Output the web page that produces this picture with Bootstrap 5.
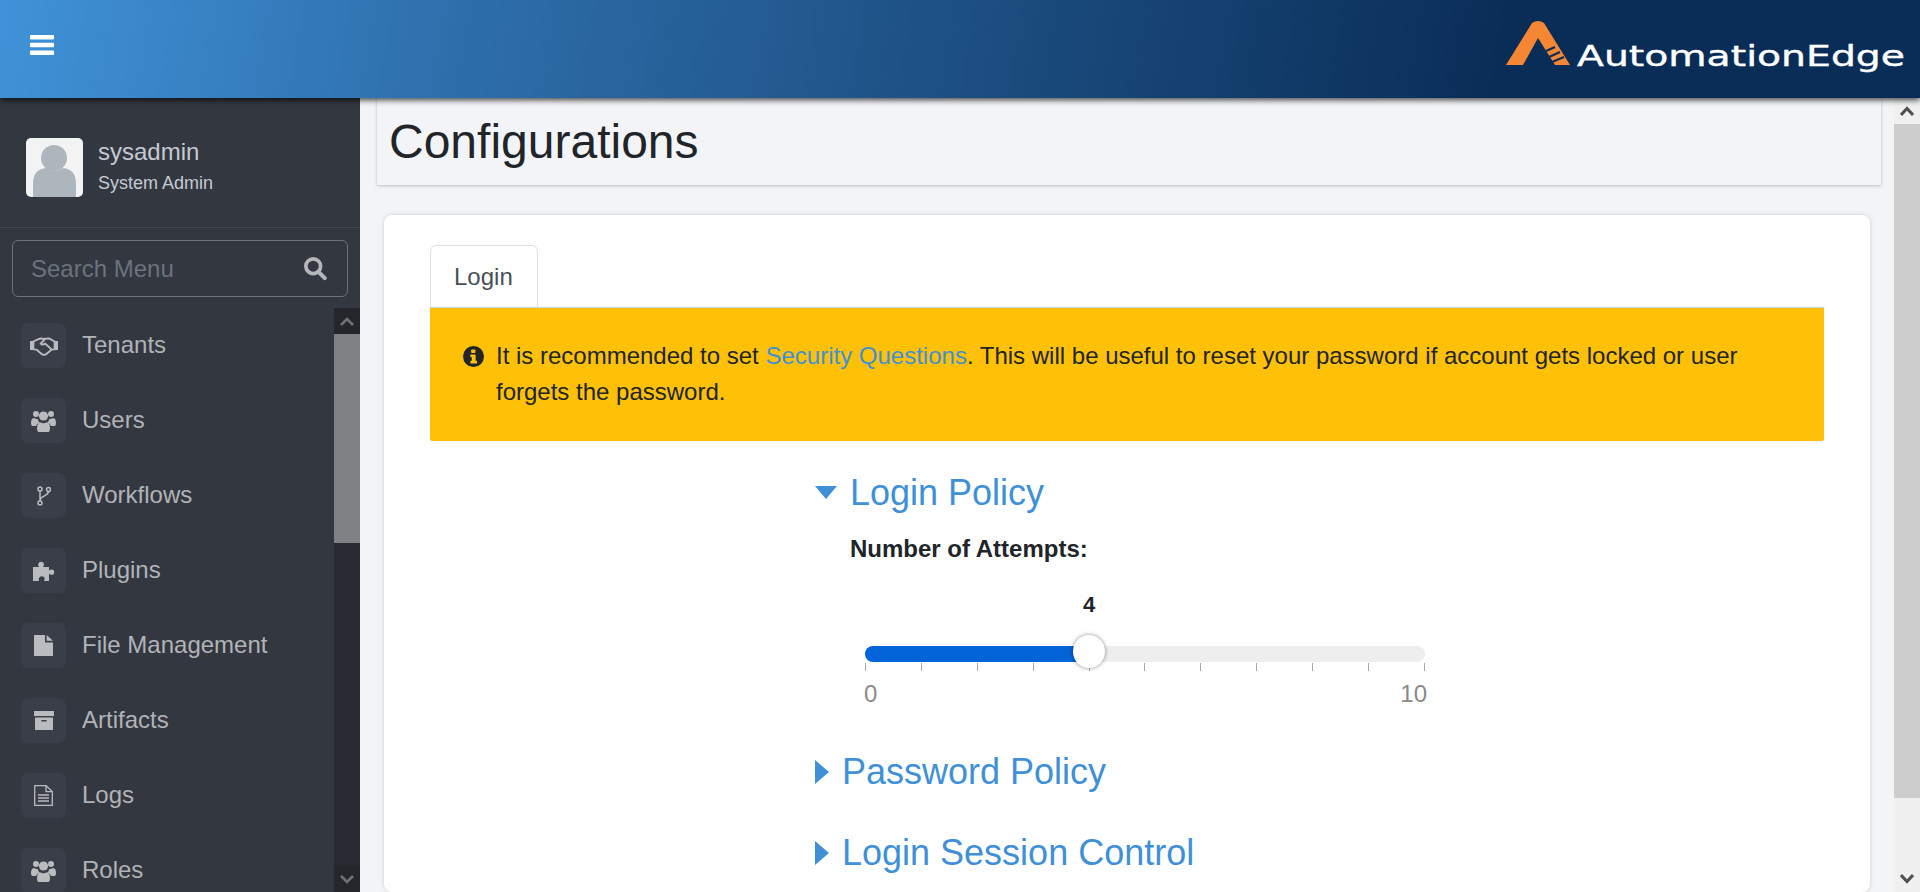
<!DOCTYPE html>
<html lang="en">
<head>
<meta charset="utf-8">
<title>Configurations</title>
<link rel="stylesheet" href="https://cdn.jsdelivr.net/npm/bootstrap@5.3.0/dist/css/bootstrap.min.css">
<style>
html,body{height:100%;}
body{font-family:"Liberation Sans",Arial,sans-serif;font-size:24px;background:#f3f4f8;color:#212529;overflow:hidden;}
.ae-header{height:98px;flex:none;padding:0 15px 0 30px;background:linear-gradient(100deg,#4092d8 0%,#2f71ae 22%,#0a2d57 78%,#0a2d57 100%);box-shadow:0 2px 6px rgba(0,0,0,.75);position:relative;z-index:5;}
.ae-burger{margin-top:-8px;line-height:0;}
.ae-body{flex:1;min-height:0;}
.ae-side{width:360px;flex:none;background:#333740;color:#b4b6ba;}
.ae-user{height:130px;padding:40px 26px 0;border-bottom:1px solid #434750;gap:15px;flex:none;}
.ae-name{font-size:24px;line-height:28px;color:#c5cad2;}
.ae-role{font-size:18px;line-height:22px;color:#c5cad2;margin-top:6px;}
.ae-avatar{width:57px;height:59px;border-radius:5px;background:#f3f3f3;display:block;}
.ae-search{margin:12px 12px 11px;height:57px;border:1px solid #6e7279;border-radius:6px;padding:0 20px 0 18px;flex:none;}
.ae-search input{background:transparent;border:0;outline:0;font-size:24px;color:#dee2e6;width:100%;padding:0;}
.ae-search input::placeholder{color:#6c737c;opacity:1;}
.ae-menuwrap{flex:1;min-height:0;}
.ae-menu{flex:1;overflow:hidden;padding:15px 0 0 21px;margin:0;list-style:none;}
.ae-menu li{height:45px;margin-bottom:30px;gap:16px;font-size:24px;color:#b1b3b7;}
.ae-menu li b{font-weight:400;margin-top:-2px;}
.ae-ico{width:45px;height:45px;border-radius:7px;background:#3a3e48;flex:none;}
.ae-ico svg{fill:#b9bbbe;display:block;}
.ae-sbar{width:26px;flex:none;background:#282a32;}
.ae-sbtn{height:26px;flex:none;background:#24262c;}
.ae-sthumb{height:209px;background:#7f8185;flex:none;}
.ae-sfill{flex:1;}
.ae-main{flex:1;min-width:0;overflow:hidden;}
.ae-title{margin-left:17px;width:1504px;height:87px;background:#f3f4f8;box-shadow:0 1px 3px rgba(0,0,0,.22);padding-left:12px;flex:none;}
.ae-title h1{font-size:48px;font-weight:400;margin:0;line-height:1.2;padding-top:15px;}
.ae-card{margin:30px 0 0 24px;width:1486px;background:#fff;border-radius:8px;padding:30px 46px 0 46px;box-shadow:0 0 4px rgba(0,0,0,.16);flex:1;border:0;}
.ae-tabs{border-bottom:0;}
.ae-tabs .nav-link,.ae-tabs .nav-link.active{font-size:24px;line-height:36px;padding:13px 24px 13px 23px;color:#495057;background:#fff;border:1px solid #dee2e6;border-bottom:0;border-radius:6px 6px 0 0;height:63px;width:108px;}
.ae-alert{background:#ffc107;border:0;border-top:1px solid #c9d7e6;border-radius:0 0 3px 3px;height:134px;padding:30px 33px 0 33px;margin:0;gap:12px;line-height:36px;color:#212529;box-shadow:0 0 1px rgba(0,0,0,.25);}
.ae-alert a{color:#3f90d6;text-decoration:none;}
.ae-alert svg{flex:none;margin-top:8px;}
.ae-form{margin-left:385px;width:700px;}
.ae-h{font-size:36px;font-weight:400;line-height:43px;color:#3f90d6;margin:0;}
.ae-h svg{fill:#3f90d6;display:block;flex:none;}
.ae-label{font-weight:700;line-height:36px;margin:17px 0 0 35px;color:#212529;}
.ae-slider{position:relative;margin:38px 0 0 50px;width:560px;height:120px;}
.ae-val{position:absolute;top:-15px;transform:translateX(-50%);font-weight:700;font-size:22px;line-height:30px;}
.ae-track{position:absolute;top:41px;left:0;right:0;height:16px;border-radius:8px;background:#eeeeee;overflow:hidden;}
.ae-fill{height:100%;background:#0264d8;}
.ae-thumb{position:absolute;top:30px;width:32px;height:33px;transform:translateX(-50%);border-radius:50%;background:#fff;box-shadow:0 0 4px rgba(0,0,0,.45);z-index:2;}
.ae-ticks{position:absolute;top:58px;left:0;right:0;}
.ae-ticks i{display:block;width:1px;height:8px;background:#aaa;}
.ae-nums{position:absolute;top:71px;left:-1px;right:-2px;color:#8a8a8a;line-height:36px;}
.ae-spacer{margin-top:38px;}
.ae-msbar{width:26px;flex:none;background:#f0f0f0;}
.ae-msbtn{height:26px;flex:none;}
.ae-mthumb{height:674px;background:#cdcdcd;flex:none;}
</style>
</head>
<body class="d-flex flex-column">
<header class="ae-header d-flex align-items-center justify-content-between">
  <div class="ae-burger">
    <svg width="24" height="20" viewBox="0 0 24 20"><rect y="0" width="24" height="4.4" rx=".8" fill="#fff"/><rect y="7.8" width="24" height="4.4" rx=".8" fill="#fff"/><rect y="15.6" width="24" height="4.4" rx=".8" fill="#fff"/></svg>
  </div>
  <svg width="400" height="56" viewBox="0 0 400 56">
    <path d="M1 44 L27 2 Q33 -2 39 2 L65 44 H50 L33 17 L18 44 Z" fill="#f58634"/>
    <path d="M41 30 L50 26 M44 36 L55 31 M47 41 L59 36" stroke="#0a2d57" stroke-width="2.2" fill="none"/>
    <text x="72" y="45" textLength="328" lengthAdjust="spacingAndGlyphs" font-family="DejaVu Sans, sans-serif" font-size="27.5" font-weight="400" fill="#ffffff" stroke="#ffffff" stroke-width=".4">AutomationEdge</text>
  </svg>
</header>
<div class="ae-body d-flex">
  <aside class="ae-side d-flex flex-column">
    <div class="ae-user d-flex">
      <svg class="ae-avatar" viewBox="0 0 57 59"><circle cx="28" cy="20" r="13" fill="#aeb6bd"/><path d="M7 59 V46 Q7 31 20 30 Q28 36 37 30 Q50 31 50 46 V59 Z" fill="#aeb6bd"/></svg>
      <div>
        <div class="ae-name">sysadmin</div>
        <div class="ae-role">System Admin</div>
      </div>
    </div>
    <div class="ae-search d-flex align-items-center">
      <input type="text" placeholder="Search Menu" aria-label="Search Menu">
      <svg width="25" height="25" viewBox="0 0 25 25" class="flex-none"><circle cx="10" cy="10" r="8" fill="none" stroke="#b4b6ba" stroke-width="4"/><path d="M16 16.5 L22.5 23" stroke="#b4b6ba" stroke-width="4.4" stroke-linecap="round"/></svg>
    </div>
    <div class="ae-menuwrap d-flex">
      <ul class="ae-menu">
        <li class="d-flex align-items-center"><span class="ae-ico d-flex align-items-center justify-content-center">
          <svg width="28" height="20" viewBox="0 0 28 20"><path d="M0 5h3.2v9H0zM24.8 5H28v9h-3.2z"/><path fill="none" stroke="#b9bbbe" stroke-width="1.9" stroke-linejoin="round" stroke-linecap="round" d="M3.4 5.5 L8.5 3.2 Q11 2 13.2 3 L19 2.4 L24.6 5.5 V13.4 L21.8 13.6 L15.8 18.4 Q14 19.4 12.2 18.4 L6.4 13.6 L3.4 13.4 Z M15 3.2 L10.6 7.6 Q12.6 9.6 15.2 7.6 L21.4 13.2"/></svg></span><b>Tenants</b></li>
        <li class="d-flex align-items-center"><span class="ae-ico d-flex align-items-center justify-content-center">
          <svg width="25" height="22" viewBox="0 0 25 22"><circle cx="5" cy="4" r="3"/><circle cx="20" cy="4" r="3"/><circle cx="12.5" cy="6" r="4.6"/><path d="M0 13 Q0 8.2 3 8 Q5.2 9.4 6.8 9 Q7 11.4 8.6 12.6 Q6 13.4 5 16 H1.2 Q0 16 0 13ZM25 13 Q25 8.2 22 8 Q19.8 9.4 18.2 9 Q18 11.4 16.4 12.6 Q19 13.4 20 16 H23.8 Q25 16 25 13Z"/><path d="M6 18.4 Q6 12.6 9 12.2 Q12.5 14.4 16 12.2 Q19 12.6 19 18.4 Q19 22 16.5 22 H8.5 Q6 22 6 18.4Z"/></svg></span><b>Users</b></li>
        <li class="d-flex align-items-center"><span class="ae-ico d-flex align-items-center justify-content-center">
          <svg width="14" height="20" viewBox="0 0 14 20" style="fill:none"><g fill="none" stroke="#b9bbbe" stroke-width="1.5"><circle cx="3" cy="3" r="2"/><circle cx="3" cy="17" r="2"/><circle cx="11.5" cy="3.5" r="2"/><path d="M3 5V15M11.5 5.5C11.5 10 4 9.5 3 14"/></g></svg></span><b>Workflows</b></li>
        <li class="d-flex align-items-center"><span class="ae-ico d-flex align-items-center justify-content-center">
          <svg width="22" height="20" viewBox="0 0 22 20"><path d="M0 6 H6 Q5 4.6 5.2 3 A3 3 0 0 1 11 3 Q11 4.6 10 6 H16 V9.6 Q17 8.6 18.6 8.6 A2.6 2.6 0 0 1 18.6 13.8 Q17 13.8 16 12.8 V20 H11 Q12.2 18 11.4 16.6 Q9.8 14.6 7.6 15.4 Q5 16.8 6 20 H0 Z"/></svg></span><b>Plugins</b></li>
        <li class="d-flex align-items-center"><span class="ae-ico d-flex align-items-center justify-content-center">
          <svg width="19" height="21" viewBox="0 0 19 21"><path d="M0 0 H11 V7.4 H19 V21 H0 Z"/><path d="M12.6 0 L19 5.8 H12.6 Z"/></svg></span><b>File Management</b></li>
        <li class="d-flex align-items-center"><span class="ae-ico d-flex align-items-center justify-content-center">
          <svg width="20" height="19" viewBox="0 0 20 19"><path d="M0 0 H20 V5 H0 Z"/><path fill-rule="evenodd" d="M1 6.4 H19 V19 H1 Z M7.4 9 V10.6 H12.6 V9 Z"/></svg></span><b>Artifacts</b></li>
        <li class="d-flex align-items-center"><span class="ae-ico d-flex align-items-center justify-content-center">
          <svg width="19" height="21" viewBox="0 0 19 21" style="fill:none"><g fill="none" stroke="#b9bbbe" stroke-width="1.3"><path d="M.7.7 H12 L18.3 6.6 V20.3 H.7 Z"/><path d="M12 .7 V6.6 H18.3M4 10 H15M4 13 H15M4 16 H15"/></g></svg></span><b>Logs</b></li>
        <li class="d-flex align-items-center"><span class="ae-ico d-flex align-items-center justify-content-center">
          <svg width="25" height="22" viewBox="0 0 25 22"><circle cx="5" cy="4" r="3"/><circle cx="20" cy="4" r="3"/><circle cx="12.5" cy="6" r="4.6"/><path d="M0 13 Q0 8.2 3 8 Q5.2 9.4 6.8 9 Q7 11.4 8.6 12.6 Q6 13.4 5 16 H1.2 Q0 16 0 13ZM25 13 Q25 8.2 22 8 Q19.8 9.4 18.2 9 Q18 11.4 16.4 12.6 Q19 13.4 20 16 H23.8 Q25 16 25 13Z"/><path d="M6 18.4 Q6 12.6 9 12.2 Q12.5 14.4 16 12.2 Q19 12.6 19 18.4 Q19 22 16.5 22 H8.5 Q6 22 6 18.4Z"/></svg></span><b>Roles</b></li>
      </ul>
      <div class="ae-sbar d-flex flex-column">
        <div class="ae-sbtn d-flex align-items-center justify-content-center"><svg width="14" height="9" viewBox="0 0 14 9"><path d="M1 8 L7 2 L13 8" fill="none" stroke="#6f7176" stroke-width="2.6"/></svg></div>
        <div class="ae-sthumb"></div>
        <div class="ae-sfill"></div>
        <div class="ae-sbtn d-flex align-items-center justify-content-center"><svg width="14" height="9" viewBox="0 0 14 9"><path d="M1 1 L7 7 L13 1" fill="none" stroke="#6f7176" stroke-width="2.6"/></svg></div>
      </div>
    </div>
  </aside>
  <main class="ae-main d-flex flex-column">
    <div class="ae-title"><h1>Configurations</h1></div>
    <div class="ae-card">
      <ul class="nav nav-tabs ae-tabs"><li class="nav-item"><a class="nav-link active" href="#">Login</a></li></ul>
      <div class="alert ae-alert d-flex" role="alert">
        <svg width="21" height="21" viewBox="0 0 21 21"><circle cx="10.5" cy="10.5" r="10.5" fill="#212529"/><rect x="8.2" y="3.4" width="4.2" height="3.6" rx=".8" fill="#ffc107"/><path d="M7.4 8.6 H12.6 V14.8 H14 V17.4 H7.4 V14.8 H8.8 V11.2 H7.4 Z" fill="#ffc107"/></svg>
        <div>It is recommended to set <a href="#">Security Questions</a>. This will be useful to reset your password if account gets locked or user forgets the password.</div>
      </div>
      <div class="ae-form">
        <h3 class="ae-h d-flex align-items-center" style="margin-top:30px;gap:13px"><svg width="22" height="13" viewBox="0 0 22 13"><path d="M0 0 H22 L11 13 Z"/></svg>Login Policy</h3>
        <div class="ae-label">Number of Attempts:</div>
        <div class="ae-slider">
          <div class="ae-val" style="left:40%">4</div>
          <div class="ae-track"><div class="ae-fill" style="width:40%"></div></div>
          <div class="ae-thumb" style="left:40%"></div>
          <div class="ae-ticks d-flex justify-content-between"><i></i><i></i><i></i><i></i><i></i><i></i><i></i><i></i><i></i><i></i><i></i></div>
          <div class="ae-nums d-flex justify-content-between"><span>0</span><span>10</span></div>
        </div>
        <h3 class="ae-h d-flex align-items-center" style="margin-top:25px;gap:13px"><svg width="14" height="24" viewBox="0 0 14 24"><path d="M0 0 L14 12 L0 24 Z"/></svg>Password Policy</h3>
        <h3 class="ae-h d-flex align-items-center ae-spacer" style="gap:13px"><svg width="14" height="24" viewBox="0 0 14 24"><path d="M0 0 L14 12 L0 24 Z"/></svg>Login Session Control</h3>
      </div>
    </div>
  </main>
  <div class="ae-msbar d-flex flex-column">
    <div class="ae-msbtn d-flex align-items-center justify-content-center"><svg width="14" height="10" viewBox="0 0 14 10"><path d="M1 9 L7 2.5 L13 9" fill="none" stroke="#505050" stroke-width="3"/></svg></div>
    <div class="ae-mthumb"></div>
    <div class="flex-grow-1"></div>
    <div class="ae-msbtn d-flex align-items-center justify-content-center"><svg width="14" height="10" viewBox="0 0 14 10"><path d="M1 1 L7 7.5 L13 1" fill="none" stroke="#505050" stroke-width="3"/></svg></div>
  </div>
</div>
<script src="https://cdn.jsdelivr.net/npm/bootstrap@5.3.0/dist/js/bootstrap.bundle.min.js"></script>
</body>
</html>
